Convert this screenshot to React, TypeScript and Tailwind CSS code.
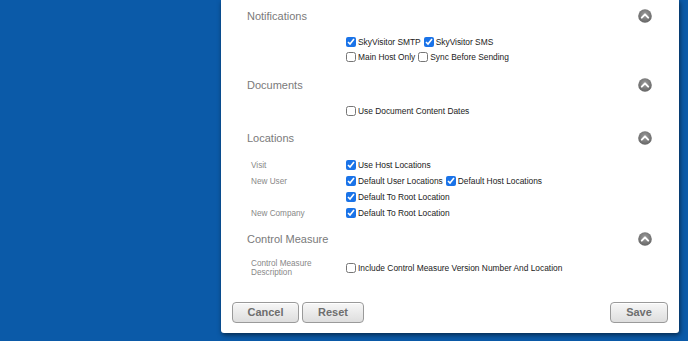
import React from "react";

const font = { fontFamily: '"Liberation Sans", Arial, sans-serif' };

function CollapseIcon() {
  return (
    <svg width="14" height="14" viewBox="0 0 14 14">
      <defs>
        <radialGradient id="cg" cx="50%" cy="40%" r="60%">
          <stop offset="0%" stopColor="#a0a0a0" />
          <stop offset="100%" stopColor="#646464" />
        </radialGradient>
      </defs>
      <circle cx="7" cy="7" r="6.8" fill="url(#cg)" />
      <polyline points="3.8,8.6 7,5.4 10.2,8.6" fill="none" stroke="#fff" strokeWidth="2" strokeLinecap="round" strokeLinejoin="round" />
    </svg>
  );
}

function Header({ title, mt }: { title: string; mt: string }) {
  return (
    <div className={`flex h-[20px] items-center justify-between pl-[26px] pr-[27px] ${mt}`}>
      <span className="text-[11px] text-[#7a7a7a]">{title}</span>
      <CollapseIcon />
    </div>
  );
}

function Check({ label, checked }: { label: string; checked?: boolean }) {
  return (
    <label className="mr-[3px] inline-flex items-center">
      <input
        type="checkbox"
        defaultChecked={checked}
        className="m-0 mr-[2px] h-[10px] w-[10px] accent-[#1a73e8]"
      />
      <span className="text-[8.4px] text-[#222]">{label}</span>
    </label>
  );
}

function Row({ label, h = "h-[16px]", children }: { label?: React.ReactNode; h?: string; children: React.ReactNode }) {
  return (
    <div className={`flex ${h} items-center pl-[30px]`}>
      <div className="w-[95px] text-[8.2px] leading-[9px] text-[#888]">{label}</div>
      <div className="flex items-center">{children}</div>
    </div>
  );
}

function Btn({ children, w }: { children: React.ReactNode; w: string }) {
  return (
    <button
      className={`h-[21px] ${w} rounded-[4px] border border-[#9a9a9a] bg-gradient-to-b from-[#f7f7f7] to-[#dedede] text-[11px] font-bold text-[#6e6e6e] shadow-[inset_0_1px_0_#fff]`}
    >
      {children}
    </button>
  );
}

export default function App() {
  return (
    <div className="h-[341px] w-[688px] overflow-hidden bg-[#0b5aa8]" style={font}>
      <div className="ml-[221px] flex h-[333px] w-[458px] flex-col rounded-b-[3px] bg-white shadow-[1px_2px_5px_rgba(0,0,0,0.55)]">
        <Header title="Notifications" mt="mt-[6px]" />
        <div className="mt-[9px]">
          <Row h="h-[15px]">
            <Check label="SkyVisitor SMTP" checked />
            <Check label="SkyVisitor SMS" checked />
          </Row>
          <Row h="h-[15px]">
            <Check label="Main Host Only" />
            <Check label="Sync Before Sending" />
          </Row>
        </div>
        <Header title="Documents" mt="mt-[10px]" />
        <div className="mt-[9px]">
          <Row h="h-[15px]">
            <Check label="Use Document Content Dates" />
          </Row>
        </div>
        <Header title="Locations" mt="mt-[9px]" />
        <div className="mt-[9px]">
          <Row label="Visit">
            <Check label="Use Host Locations" checked />
          </Row>
          <Row label="New User">
            <Check label="Default User Locations" checked />
            <Check label="Default Host Locations" checked />
          </Row>
          <Row>
            <Check label="Default To Root Location" checked />
          </Row>
          <Row label="New Company">
            <Check label="Default To Root Location" checked />
          </Row>
        </div>
        <Header title="Control Measure" mt="mt-[8px]" />
        <div className="mt-[9px]">
          <Row
            h="h-[20px]"
            label={
              <>
                Control Measure
                <br />
                Description
              </>
            }
          >
            <Check label="Include Control Measure Version Number And Location" />
          </Row>
        </div>
        <div className="mt-auto mb-[10px] flex items-center justify-between px-[11px]">
          <div className="flex gap-[3px]">
            <Btn w="w-[67px]">Cancel</Btn>
            <Btn w="w-[62px]">Reset</Btn>
          </div>
          <Btn w="w-[58px]">Save</Btn>
        </div>
      </div>
    </div>
  );
}
